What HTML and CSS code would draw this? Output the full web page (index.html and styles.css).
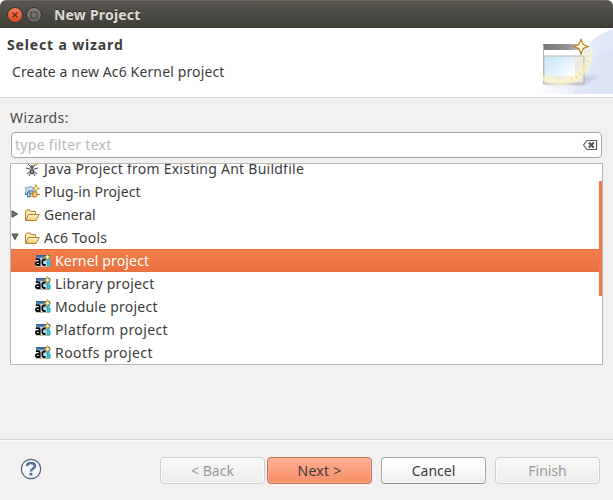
FILE: index.html
```html
<!DOCTYPE html>
<html lang="en">
<head>
<meta charset="utf-8">
<title>New Project</title>
<link rel="stylesheet" href="styles.css">
</head>
<body>
<svg width="0" height="0" class="defs">
  <defs>
    <linearGradient id="fold" x1="0" y1="0" x2="0" y2="1"><stop offset="0" stop-color="#fff6d2"/><stop offset="1" stop-color="#f2c765"/></linearGradient>
    <linearGradient id="sky" x1="0" y1="0" x2="0" y2="1"><stop offset="0" stop-color="#28588f"/><stop offset=".5" stop-color="#9cc4e8"/><stop offset="1" stop-color="#eef5fb"/></linearGradient>
    <symbol id="folder" viewBox="0 0 16 16">
      <path d="M1.500 13V4.500l1-1.500h3.500l1 1.500h4.500V7" fill="#fbe7a8" stroke="#b78032"/>
      <path d="M1.500 13.500L4.500 7.500H15.300L12 13.500Z" fill="url(#fold)" stroke="#b78032"/>
    </symbol>
    <symbol id="ac6" viewBox="0 0 16 16">
      <rect x="1" y="2" width="14" height="11" fill="url(#sky)"/>
      <path d="M1 13.500h14" stroke="#b5ae91"/>
      <path d="M1 6.500H4.700V12.500M4.700 9H2Q1 9 1 10.500T2 12H4.700M10.500 6.500H7.500V12H10.500" fill="none" stroke="#fff" stroke-width="3" opacity=".6"/>
      <path d="M.8 6.200H3.500Q4.700 6.200 4.700 7.500V13M4.700 9.200H2Q.9 9.200 .9 10.600T2 12H4.700M10.600 6.500H9Q7.300 6.500 7.300 9.200T9 12H10.600" fill="none" stroke="#080808" stroke-width="1.800"/>
      <path d="M15 7H12.500V12.300H14.800V9.600H12.500" fill="none" stroke="#28b2c9" stroke-width="1.600"/>
      <path d="M12.500 .3L13.500 3L16 4L13.500 5L12.500 7.500L11.500 5L9 4L11.500 3Z" fill="#fff8c9" stroke="#b58b18" stroke-width=".8"/>
    </symbol>
  </defs>
</svg>
<div class="window">
  <div class="titlebar">
    <span class="orb close"><svg width="8" height="8" viewBox="0 0 8 8"><path d="M1.500 1.500l5 5M6.500 1.500l-5 5" stroke="#6b2b17" stroke-width="1.300"/></svg></span>
    <span class="orb max"><svg width="8" height="8" viewBox="0 0 8 8"><path d="M1 1h6v6H1z" fill="none" stroke="#45433e" stroke-width="1.200"/></svg></span>
    <span class="title">New Project</span>
  </div>
  <header class="header">
    <div class="heading">
      <h1>Select a wizard</h1>
      <p>Create a new Ac6 Kernel project</p>
    </div>
    <svg class="banner" width="100" height="66" viewBox="0 0 100 66">
      <defs>
        <linearGradient id="b1" x1="0" y1="0" x2="1" y2="0"><stop offset="0" stop-color="#e8edfa" stop-opacity="0"/><stop offset=".6" stop-color="#e8edfa"/><stop offset="1" stop-color="#e0e7f8"/></linearGradient>
        <linearGradient id="b2" x1="0" y1="0" x2="1" y2="1"><stop offset="0" stop-color="#c3e6fa"/><stop offset="1" stop-color="#fff"/></linearGradient>
        <linearGradient id="b3" x1="0" y1="0" x2="1" y2="0"><stop offset="0" stop-color="#777"/><stop offset=".6" stop-color="#929292"/><stop offset="1" stop-color="#d6d6d6"/></linearGradient>
        <filter id="soft" x="-30%" y="-30%" width="160%" height="160%"><feGaussianBlur stdDeviation="1.600"/></filter>
      </defs>
      <path d="M100 1Q80 7 70 23Q65 44 20 66H100Z" fill="url(#b1)"/>
      <path d="M100 22Q78 25 67 42L60 66H100Z" fill="#d4def5" opacity=".35"/>
      <path d="M29 57h43l14-9H70z" fill="#a9b1d0" opacity=".45" filter="url(#soft)"/>
      <rect x="30" y="16" width="41" height="40" fill="#fff"/>
      <rect x="30" y="16" width="41" height="6" fill="url(#b3)"/>
      <path d="M31 28H71V55H31Z" fill="#edeade" stroke="#aeb8bf"/>
      <rect x="32" y="29" width="30" height="19" fill="url(#b2)"/>
      <path d="M30.500 17V56H71V29" fill="none" stroke="#b4b4b1"/>
      <path d="M29 49Q48 60 65 48Q79 37 75 21" fill="none" stroke="#fff8cb" stroke-width="6" opacity=".8" filter="url(#soft)"/>
      <path d="M58 52Q77 43 75 23" fill="none" stroke="#f5e2a0" stroke-width="3" stroke-dasharray="2 3"/>
      <path d="M68 11.500L70.200 16.600L75 18.500L70.200 20.600L68 26L65.800 20.600L61 18.500L65.800 16.600Z" fill="#fff8d8" stroke="#b58a32" stroke-width="1.300"/>
    </svg>
  </header>
  <main class="content">
    <label class="wizards">Wizards:</label>
    <div class="filter">
      <span>type filter text</span>
      <svg width="16" height="12" viewBox="0 0 16 12"><path d="M1.500 6L5 1.500H14.500V10.500H5Z" fill="#fff" stroke="#5c5e5a" stroke-width="1.200"/><path d="M6.800 3.500l5 5M11.800 3.500l-5 5" stroke="#50534e" stroke-width="2"/></svg>
    </div>
    <div class="tree">
      <div class="rows">
        <div class="row"><i class="arrow"></i>
          <svg class="icon" width="16" height="16" viewBox="0 0 16 16"><path d="M3 2l4 4M13 2L9 6M2 7l4 1M14 7l-4 1M3 13l4-3M13 13l-4-3M5 15l2-4M11 15l-2-4" stroke="#3d3d3d"/><ellipse cx="8" cy="6" rx="2" ry="2" fill="#666"/><ellipse cx="8" cy="10.500" rx="1.800" ry="2.500" fill="#888" stroke="#444"/><path d="M11 4l3-2" stroke="#cda52c" stroke-width="2"/></svg>
          <span class="t-java">Java Project from Existing Ant Buildfile</span></div>
        <div class="row"><i class="arrow"></i>
          <svg class="icon" width="16" height="16" viewBox="0 0 16 16"><path d="M1.500 3.500H4Q6 1 8.500 3.500H11V10H1.500V7.500Q3 6 1.500 5Z" fill="#c7dcf2" stroke="#86a9d2"/><path d="M4 7h5v2M1 10.500h2.500M3.500 8v5H6V8z" fill="#b3d0ee" stroke="#3d70aa"/><path d="M9 8h2.500l1.500 1v3l-1.500 1H9zM6 9.500h3M6 12h3M13 10.500h3" fill="#f6d56c" stroke="#b17d19"/><path d="M12 .5l1 3 2.500 1-2.500 1-1 2.500-1-2.500-2.500-1 2.500-1z" fill="#fff8d2" stroke="#b58b18" stroke-width=".8"/></svg>
          <span class="t-plug">Plug-in Project</span></div>
        <div class="row"><i class="arrow"><svg width="8" height="8" viewBox="0 0 8 8"><path d="M1 .8L6.600 4L1 7.200Z" fill="#777" stroke="#444"/></svg></i>
          <svg class="icon" width="16" height="16"><use href="#folder"/></svg><span>General</span></div>
        <div class="row"><i class="arrow"><svg width="8" height="8" viewBox="0 0 8 8"><path d="M1 1H7L4 6.500Z" fill="#777" stroke="#444"/></svg></i>
          <svg class="icon" width="16" height="16"><use href="#folder"/></svg><span class="t-tools">Ac6 Tools</span></div>
        <div class="row child selected"><svg class="icon" width="16" height="16"><use href="#ac6"/></svg><span class="t-kern">Kernel project</span></div>
        <div class="row child"><svg class="icon" width="16" height="16"><use href="#ac6"/></svg><span class="t-lib">Library project</span></div>
        <div class="row child"><svg class="icon" width="16" height="16"><use href="#ac6"/></svg><span class="t-mod">Module project</span></div>
        <div class="row child"><svg class="icon" width="16" height="16"><use href="#ac6"/></svg><span class="t-plat">Platform project</span></div>
        <div class="row child"><svg class="icon" width="16" height="16"><use href="#ac6"/></svg><span class="t-root">Rootfs project</span></div>
      </div>
      <div class="scroll"></div>
    </div>
  </main>
  <footer class="footer">
    <svg class="help" width="22" height="22" viewBox="0 0 22 22"><circle cx="11" cy="11" r="9.700" fill="#f6f7f8" stroke="#4d6482" stroke-width="1.200"/><path d="M7 8.200Q7.200 5 11 5T15 8Q15 9.700 13 10.700T11 13.500" fill="none" stroke="#566f95" stroke-width="2.500"/><rect x="9.500" y="14.800" width="3" height="2.700" rx=".7" fill="#566f95"/></svg>
    <div class="button disabled back"><span>&lt; Back</span></div>
    <div class="button default"><span>Next &gt;</span></div>
    <div class="button cancel"><span>Cancel</span></div>
    <div class="button disabled finish"><span>Finish</span></div>
  </footer>
</div>
</body>
</html>
```
FILE: styles.css
```css
* { box-sizing: border-box; }
body { margin: 0; font: 14px/20px "Noto Sans", "Open Sans", sans-serif; color: #3c3c3c; background: #fff; }
.defs { position: absolute; }
.window { width: 613px; height: 500px; display: flex; flex-direction: column; background: #f2f1f0; overflow: hidden; border-radius: 6px 6px 0 0; }
.titlebar { height: 28px; flex: none; display: flex; align-items: center; padding: 1px 0 0 7px; background: linear-gradient(#58564f, #3f3e39); border-top: 1px solid #6b6962; }
.orb { width: 16px; height: 16px; border-radius: 50%; border: 1px solid #35342f; display: flex; align-items: center; justify-content: center; margin-right: 3px; }
.close { background: linear-gradient(#f37e5c, #dd4d20); }
.max { background: linear-gradient(#85837b, #65635b); }
.title { margin-left: 9px; font-weight: bold; color: #dfdbd2; letter-spacing: .2px; text-shadow: 0 -1px #292824; white-space: nowrap; }
.header { height: 70px; flex: none; display: flex; justify-content: space-between; background: #fff; border-bottom: 1px solid #d7d5d3; }
.heading { padding: 7px 0 0 7px; white-space: nowrap; }
h1 { margin: 0; font-size: 14px; line-height: 20px; letter-spacing: .85px; }
.heading p { margin: 7px 0 0 5px; letter-spacing: .13px; }
.content { height: 341px; flex: none; padding: 10px 10px 0; border-top: 1px solid #fafafa; }
.wizards { display: block; height: 23px; color: #4c4c4c; letter-spacing: .4px; margin-top: -1px; margin-bottom: 1px; }
.filter { height: 26px; margin: 0 0 5px 1px; display: flex; align-items: center; justify-content: space-between; padding: 0 3px; border: 1px solid #a9a6a2; border-radius: 4px; background: #fff; color: #bbb8b4; width: 591px; letter-spacing: .3px; }
.tree { height: 202px; width: 593px; display: flex; border: 1px solid #bbb8b4; background: #fff; overflow: hidden; }
.rows { flex: 1; margin-top: -7px; }
.row { height: 23px; display: flex; align-items: center; white-space: nowrap; }
.arrow { width: 13px; height: 9px; display: flex; }
.icon { flex: none; margin-right: 4px; }
.child { padding-left: 24px; }
.selected { color: #fff; background: linear-gradient(#f47d4c, #ea703f); border-top: 1px solid #e96d3d; }
.t-java { letter-spacing: .25px; }
.t-plug { letter-spacing: .08px; }
.t-tools { letter-spacing: .2px; }
.t-kern { letter-spacing: .16px; }
.t-lib { letter-spacing: .28px; }
.t-mod { letter-spacing: .23px; }
.t-plat { letter-spacing: .4px; }
.t-root { letter-spacing: .45px; }
.scroll { width: 3px; height: 115px; margin-top: 17px; background: #f47b4a; }
.footer { flex: 1; display: flex; border-top: 1px solid #d5d3d1; box-shadow: inset 0 1px #fafafa; padding: 17px 0 0 20px; }
.help { margin-top: 1px; flex: none; }
.button { width: 105px; height: 27px; display: flex; align-items: center; justify-content: center; border: 1px solid #aaa7a2; border-bottom-color: #96948f; border-radius: 4px; background: linear-gradient(#fff, #fbfbfb 40%, #ececeb); box-shadow: inset 0 0 0 1px rgba(255,255,255,.6); white-space: nowrap; }
.disabled { color: #999; border-color: #cfcdca; background: linear-gradient(#f8f8f7, #eeedec); }
.default { margin-left: 2px; background: linear-gradient(#ffb092, #f58e66); border-color: #b7755c; box-shadow: inset 0 0 0 1px rgba(255,190,160,.55); letter-spacing: .25px; }
.back { margin-left: 118px; }
.cancel, .finish { margin-left: 9px; }
```
